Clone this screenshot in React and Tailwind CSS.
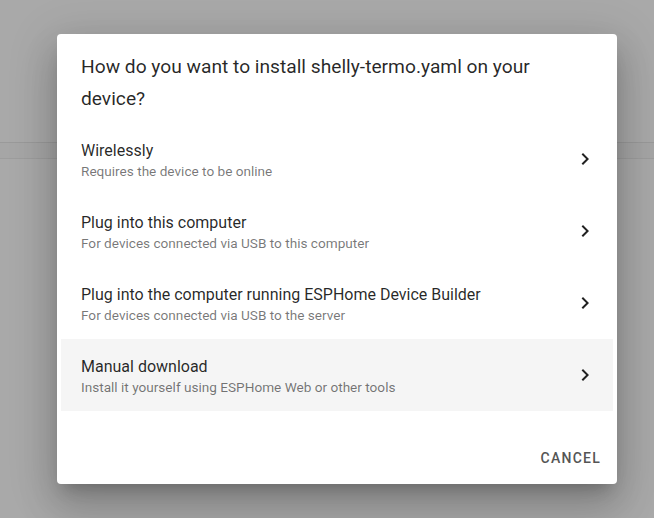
const options = [
  { title: 'Wirelessly', sub: 'Requires the device to be online' },
  { title: 'Plug into this computer', sub: 'For devices connected via USB to this computer' },
  { title: 'Plug into the computer running ESPHome Device Builder', sub: 'For devices connected via USB to the server' },
  { title: 'Manual download', sub: 'Install it yourself using ESPHome Web or other tools', active: true },
]

function Chevron() {
  return (
    <svg width="24" height="24" viewBox="0 0 24 24" className="shrink-0 text-[#212121]">
      <path fill="currentColor" d="M10 6L8.59 7.41 13.17 12l-4.58 4.59L10 18l6-6z" />
    </svg>
  )
}

export default function App() {
  return (
    <div className="relative h-[518px] w-[654px] overflow-hidden bg-[#a9a9a9] font-['Roboto',sans-serif]">
      <div className="h-[143px] border-b border-[#9a9a9a]" />
      <div className="h-[16px] border-b border-[#9d9d9d] bg-[#a6a6a6]" />

      <div className="absolute left-[57px] top-[34px] flex h-[450px] w-[560px] flex-col rounded-[4px] bg-white shadow-[0_11px_15px_-7px_rgba(0,0,0,0.2),0_24px_38px_3px_rgba(0,0,0,0.14),0_9px_46px_8px_rgba(0,0,0,0.12)]">
        <h2 className="px-6 pt-[17px] pb-[8px] text-[19.2px] leading-[32px] font-normal text-[rgba(0,0,0,0.85)]">
          How do you want to install shelly-termo.yaml on your device?
        </h2>

        <ul className="flex flex-col">
          {options.map((o) => (
            <li
              key={o.title}
              className={`mx-1 flex h-[72px] items-center justify-between pt-1 pl-5 pr-4 ${o.active ? 'bg-[#f5f5f5]' : ''}`}
            >
              <div className="flex flex-col">
                <span className="text-[16px] leading-[20px] text-[rgba(0,0,0,0.85)]">{o.title}</span>
                <span className="text-[13.6px] leading-[20px] text-[rgba(0,0,0,0.54)]">{o.sub}</span>
              </div>
              <span className="-mt-1">
                <Chevron />
              </span>
            </li>
          ))}
        </ul>

        <div className="mt-auto flex justify-end p-2">
          <button className="h-9 px-2 text-[14px] font-medium uppercase tracking-[1.25px] text-[#555555]">
            Cancel
          </button>
        </div>
      </div>
    </div>
  )
}
